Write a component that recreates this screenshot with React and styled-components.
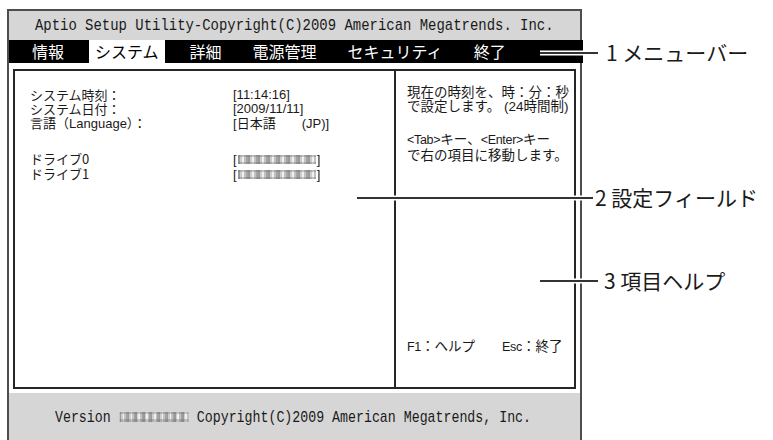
import React from 'react';
import styled, { createGlobalStyle } from 'styled-components';

const GlobalStyle = createGlobalStyle`
  html, body {
    margin: 0;
    padding: 0;
    background: #fff;
  }
  body {
    font-family: "Noto Sans CJK JP", "Liberation Sans", sans-serif;
    color: #1a1a1a;
  }
`;

const Page = styled.div`
  position: relative;
  width: 773px;
  height: 440px;
  overflow: hidden;
`;

const Frame = styled.div`
  margin: 9px 0 0 7px;
  width: 571px;
  height: 440px;
  border: 2px solid #4d4d4d;
  border-bottom: none;
  display: flex;
  flex-direction: column;
`;

const TitleBar = styled.div`
  height: 29px;
  background: #d6d6d6;
  display: flex;
  align-items: center;
  justify-content: center;
`;

const Mono = styled.span`
  display: inline-block;
  font-family: "Liberation Mono", monospace;
  font-size: 17px;
  line-height: 17px;
  white-space: nowrap;
  transform: scaleX(${(p) => p.$scale || 0.82});
  transform-origin: ${(p) => (p.$left ? 'left center' : 'center')};
`;

const MenuBar = styled.div`
  height: 23px;
  margin-right: -3px;
  background: #000;
  display: flex;
  gap: 19px;
  padding-left: 17px;
`;

const MenuItem = styled.div`
  padding: 0 6px;
  font-size: 16px;
  line-height: 23px;
  color: ${(p) => (p.$active ? '#000' : '#fff')};
  background: ${(p) => (p.$active ? '#fff' : 'transparent')};
  white-space: nowrap;
`;

const Body = styled.div`
  padding: 6px 4px 4px 4px;
  background: #fff;
`;

const Panel = styled.div`
  height: 316px;
  border: 2px solid #262626;
  display: grid;
  grid-template-columns: 379px 1fr;
`;

const Fields = styled.div`
  padding: 17px 0 0 15px;
  font-size: 13px;
  line-height: 14px;
`;

const FieldGroup = styled.div`
  margin-bottom: 21px;
`;

const FieldRow = styled.div`
  display: grid;
  grid-template-columns: 203px auto;
  white-space: nowrap;
`;

const Latin = styled.span`
  font-family: "Liberation Sans", "Noto Sans CJK JP", sans-serif;
  font-size: ${(p) => p.$size || 'inherit'};
  letter-spacing: ${(p) => (p.$tight ? '-0.3px' : 'normal')};
`;

const Masked = styled.span`
  display: inline-block;
  width: ${(p) => p.$w}px;
  height: ${(p) => p.$h || 9}px;
  vertical-align: middle;
  margin: -2px 1px 0;
  background:
    linear-gradient(180deg, rgba(110, 110, 110, 0.35) 0 2px, transparent 2px 7px, rgba(110, 110, 110, 0.35) 7px 100%),
    repeating-linear-gradient(90deg, #9a9a9a 0 2px, #cdcdcd 2px 4px, #f0f0f0 4px 6px, #c2c2c2 6px 8px, #a4a4a4 8px 10px);
`;

const Help = styled.div`
  border-left: 2px solid #262626;
  padding: 14px 0 33px 11px;
  display: flex;
  flex-direction: column;
  justify-content: space-between;
  font-size: 13.5px;
  line-height: 13.5px;
`;

const HelpPara = styled.p`
  margin: 0 0 19px;
  white-space: nowrap;
`;

const HelpKeys = styled.div`
  white-space: nowrap;
`;

const Footer = styled.div`
  flex: 1;
  background: #d6d6d6;
  padding: 10px 0 0 46px;
`;

const Callout = styled.div`
  position: absolute;
  left: ${(p) => p.$x}px;
  top: ${(p) => p.$y}px;
  width: ${(p) => p.$w}px;
  height: 1.5px;
  background: #333;
  box-shadow: 0 -1.5px 0 #fff, 0 1.5px 0 #fff;
`;

const CalloutLabel = styled.div`
  position: absolute;
  left: ${(p) => p.$x}px;
  top: ${(p) => p.$y - 15}px;
  font-size: 21px;
  line-height: 30px;
  color: #1a1a1a;
  white-space: nowrap;
`;

const menu = ['情報', 'システム', '詳細', '電源管理', 'セキュリティ', '終了'];

export default function App() {
  return (
    <Page>
      <GlobalStyle />
      <Frame>
        <TitleBar>
          <Mono>Aptio Setup Utility-Copyright(C)2009 American Megatrends. Inc.</Mono>
        </TitleBar>
        <MenuBar>
          {menu.map((m) => (
            <MenuItem key={m} $active={m === 'システム'}>{m}</MenuItem>
          ))}
        </MenuBar>
        <Body>
          <Panel>
            <Fields>
              <FieldGroup>
                <FieldRow>
                  <span>システム時刻：</span>
                  <Latin>[11:14:16]</Latin>
                </FieldRow>
                <FieldRow>
                  <span>システム日付：</span>
                  <Latin>[2009/11/11]</Latin>
                </FieldRow>
                <FieldRow>
                  <span>言語（<Latin>Language</Latin>）：</span>
                  <span><Latin>[</Latin>日本語　　<Latin>(JP)]</Latin></span>
                </FieldRow>
              </FieldGroup>
              <FieldGroup>
                <FieldRow>
                  <span>ドライブ0</span>
                  <span><Latin>[</Latin><Masked $w={78} /><Latin>]</Latin></span>
                </FieldRow>
                <FieldRow>
                  <span>ドライブ1</span>
                  <span><Latin>[</Latin><Masked $w={78} /><Latin>]</Latin></span>
                </FieldRow>
              </FieldGroup>
            </Fields>
            <Help>
              <div>
                <HelpPara>
                  現在の時刻を、時：分：秒<br />
                  で設定します。<Latin> (24</Latin>時間制<Latin>)</Latin>
                </HelpPara>
                <HelpPara>
                  <Latin $size="12.5px" $tight>&lt;Tab&gt;</Latin>キー、<Latin $size="12.5px" $tight>&lt;Enter&gt;</Latin>キー<br />
                  で右の項目に移動します。
                </HelpPara>
              </div>
              <HelpKeys>
                <Latin $size="12.5px" $tight>F1</Latin>：ヘルプ　　<Latin $size="12.5px" $tight>Esc</Latin>：終了
              </HelpKeys>
            </Help>
          </Panel>
        </Body>
        <Footer>
          <Mono $left $scale={0.78}>
            Version <Masked $w={88} $h={10} /> Copyright(C)2009 American Megatrends, Inc.
          </Mono>
        </Footer>
      </Frame>

      <Callout $x={540} $y={52} $w={58} />
      <CalloutLabel $x={606} $y={52}>1 メニューバー</CalloutLabel>
      <Callout $x={357} $y={197} $w={236} />
      <CalloutLabel $x={595} $y={197}>2 設定フィールド</CalloutLabel>
      <Callout $x={540} $y={280} $w={58} />
      <CalloutLabel $x={604} $y={280}>3 項目ヘルプ</CalloutLabel>
    </Page>
  );
}
